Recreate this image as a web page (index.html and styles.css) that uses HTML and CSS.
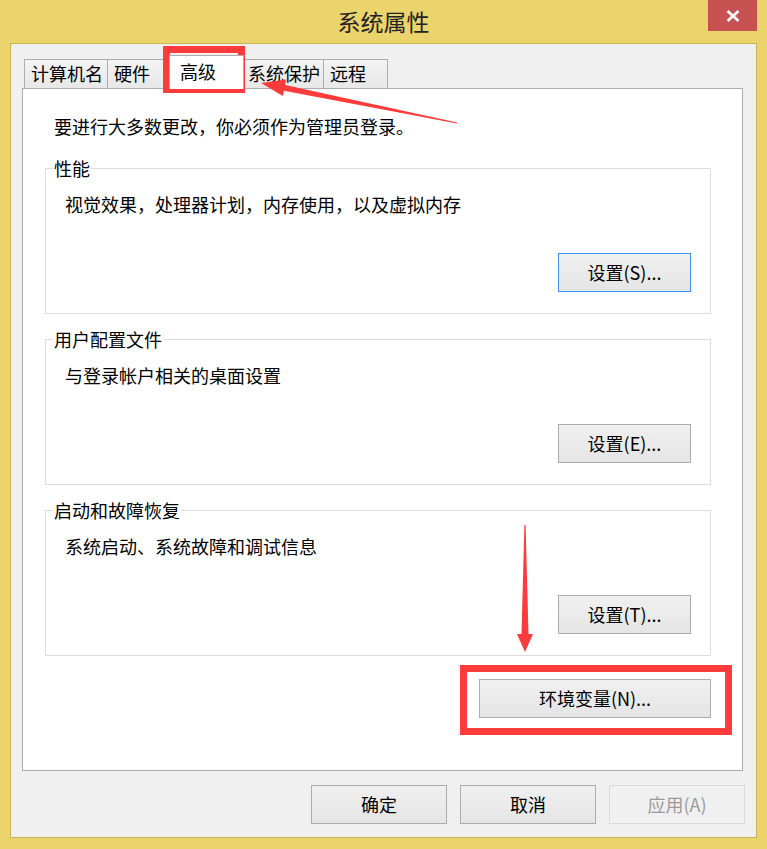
FILE: index.html
```html
<!DOCTYPE html>
<html lang="zh-CN">
<head>
<meta charset="utf-8">
<title>系统属性</title>
<link rel="stylesheet" href="styles.css">
</head>
<body>
<div class="window">
  <div class="titlebar">
    <div class="title">系统属性</div>
    <button class="close" aria-label="关闭">
      <svg width="14" height="12" viewBox="0 0 14 12"><path d="M1.5 1 L12.5 11 M12.5 1 L1.5 11" stroke="#fff" stroke-width="2.6" fill="none"/></svg>
    </button>
  </div>
  <div class="client">
    <div class="tabs">
      <div class="tab tab-computer">计算机名</div>
      <div class="tab tab-hardware">硬件</div>
      <div class="tab tab-advanced active">高级</div>
      <div class="tab tab-protect">系统保护</div>
      <div class="tab tab-remote">远程</div>
    </div>
    <div class="panel">
      <p class="intro">要进行大多数更改，你必须作为管理员登录。</p>
      <section class="group">
        <div class="group-title">性能</div>
        <p class="group-desc">视觉效果，处理器计划，内存使用，以及虚拟内存</p>
        <div class="group-actions"><button class="btn btn-set btn-default">设置(S)...</button></div>
      </section>
      <section class="group group-next">
        <div class="group-title">用户配置文件</div>
        <p class="group-desc">与登录帐户相关的桌面设置</p>
        <div class="group-actions"><button class="btn btn-set">设置(E)...</button></div>
      </section>
      <section class="group group-next">
        <div class="group-title">启动和故障恢复</div>
        <p class="group-desc">系统启动、系统故障和调试信息</p>
        <div class="group-actions"><button class="btn btn-set">设置(T)...</button></div>
      </section>
      <div class="env-row"><button class="btn btn-env">环境变量(N)...</button></div>
    </div>
    <div class="footer">
      <button class="btn btn-foot">确定</button>
      <button class="btn btn-foot">取消</button>
      <button class="btn btn-foot btn-disabled" disabled>应用(A)</button>
    </div>
  </div>
  <div class="mark mark-tab"></div>
  <div class="mark mark-env"></div>
  <svg class="arrows" width="767" height="849" viewBox="0 0 767 849">
    <polygon points="261,83 286.2,79.5 285.1,84.9 457.1,122.4 456.9,123.6 283.9,90.7 282.8,96.1" fill="#FF3B3B"/>
    <polygon points="525,652 517,634 521.5,634 524.4,525 525.6,525 528.5,634 533,634" fill="#FF3B3B"/>
  </svg>
</div>
</body>
</html>
```

FILE: styles.css
```css
* { box-sizing: border-box; }
html, body { margin: 0; padding: 0; }
body {
  background: #EBD46C;
  font-family: "Noto Sans CJK SC", "Noto Sans", sans-serif;
  color: #000;
}
.window {
  position: relative;
  width: 767px;
  height: 849px;
  background: #EBD46C;
  overflow: hidden;
}
.titlebar {
  height: 43px;
  display: grid;
  grid-template-columns: 1fr auto 1fr;
}
.title {
  grid-column: 2;
  font-size: 23px;
  line-height: 43px;
  color: #222;
}
.close {
  grid-column: 3;
  justify-self: end;
  align-self: start;
  width: 49px;
  height: 31px;
  margin-right: 10px;
  background: #C75050;
  border: 0;
  padding: 0;
  display: flex;
  align-items: center;
  justify-content: center;
}
.client {
  margin: 0 10px;
  height: 795px;
  border: 1px solid #C9B355;
  background: #F0F0F0;
  padding: 15px 13px 13px 11px;
}
.tabs {
  height: 29px;
  display: flex;
  align-items: flex-end;
  padding-left: 2px;
}
.tab {
  height: 29px;
  border: 1px solid #ACACAC;
  border-bottom: 0;
  background: linear-gradient(#F3F3F3, #E8E8E8);
  font-size: 18px;
  line-height: 26px;
  padding-left: 6px;
  margin-left: -1px;
  white-space: nowrap;
}
.tab-computer { width: 84px; margin-left: 0; }
.tab-hardware { width: 65px; }
.tab-advanced { width: 71px; }
.tab-protect { width: 83px; }
.tab-remote { width: 65px; }
.tab.active {
  position: relative;
  z-index: 1;
  width: 75px;
  height: 34px;
  margin-left: -3px;
  margin-right: -2px;
  margin-bottom: -1px;
  background: #fff;
  padding-left: 10px;
  line-height: 30px;
}
.panel {
  height: 683px;
  border: 1px solid #ADADAD;
  background: #fff;
  padding: 25px 31px 0 22px;
}
.intro {
  margin: 0 0 0 9px;
  font-size: 18px;
  line-height: 24px;
}
.group {
  height: 146px;
  margin-top: 30px;
  border: 1px solid #DCDCDC;
}
.group-next { margin-top: 25px; }
.group-title {
  width: max-content;
  margin: -11px 0 0 7px;
  padding: 0 1px;
  background: #fff;
  font-size: 18px;
  line-height: 20px;
}
.group-desc {
  margin: 14px 0 0 19px;
  font-size: 18px;
  line-height: 24px;
}
.group-actions {
  display: flex;
  justify-content: flex-end;
  margin-top: 37px;
  padding-right: 19px;
}
.btn {
  height: 39px;
  border: 1px solid #ACACAC;
  background: linear-gradient(#F0F0F0, #E5E5E5);
  font-family: "Noto Sans CJK SC", "Noto Sans", sans-serif;
  font-size: 18px;
  line-height: 37px;
  color: #000;
  padding: 0;
  text-align: center;
}
.btn-set { width: 133px; }
.btn-default { border-color: #3D95EE; }
.env-row {
  display: flex;
  justify-content: flex-end;
  margin-top: 23px;
}
.btn-env { width: 232px; }
.footer {
  display: flex;
  justify-content: flex-end;
  gap: 13px;
  margin-top: 14px;
  margin-right: -2px;
}
.btn-foot { width: 136px; }
.btn-disabled {
  border-color: #D9D9D9;
  background: #F0F0F0;
  color: #9A9A9A;
}
.mark {
  position: absolute;
  border: 7px solid #FF3B3B;
}
.mark-tab { left: 163px; top: 46px; width: 82px; height: 47px; }
.mark-env { left: 460px; top: 665px; width: 272px; height: 70px; }
.arrows {
  position: absolute;
  left: 0;
  top: 0;
  pointer-events: none;
}
```
